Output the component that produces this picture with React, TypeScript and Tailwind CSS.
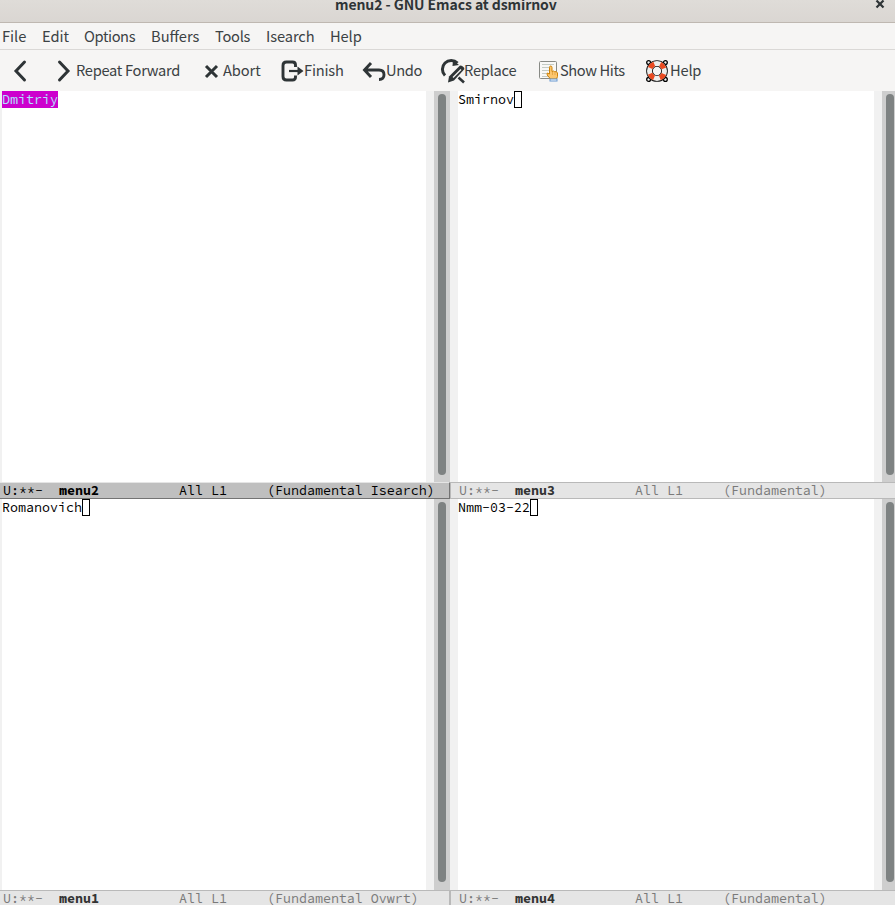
import React from "react";

const MONO = "font-['Source_Code_Pro','Noto_Sans_Mono','Liberation_Mono',monospace] text-[13.333px]";

const menus = [
  { label: "File", at: "w-10" },
  { label: "Edit", at: "w-[42px]" },
  { label: "Options", at: "w-[67px] tracking-[-0.4px]" },
  { label: "Buffers", at: "w-16" },
  { label: "Tools", at: "w-[51px] tracking-[-0.25px]" },
  { label: "Isearch", at: "w-16 tracking-[-0.1px]" },
  { label: "Help", at: "w-10 tracking-[-0.1px]" },
];

function Back() {
  return <svg width="24" height="24" viewBox="0 0 24 24" fill="none" stroke="#2e3436" strokeWidth="3" strokeLinecap="round"><path d="M17.500 3 9 12l8.500 9" /></svg>;
}
function Forward() {
  return <svg width="24" height="24" viewBox="0 0 24 24" fill="none" stroke="#2e3436" strokeWidth="3" strokeLinecap="round"><path d="M7.500 3 16 12 7.500 21" /></svg>;
}
function Abort() {
  return <svg width="16" height="16" viewBox="0 0 16 16" fill="none" stroke="#2e3436" strokeWidth="3"><path d="M3 3l11 11M14 3l-11 11" /></svg>;
}
function Finish() {
  return (
    <svg width="24" height="24" viewBox="0 0 24 24" fill="none" stroke="#2e3436" strokeWidth="2.900">
      <path d="M15.500 8V6Q15.500 3 12.500 3H6.500Q3 3 3 6.500v11Q3 21 6.500 21h6q3 0 3-3V16.500" />
      <path d="M9 12h10" strokeWidth="2.200" />
      <path d="M17.500 7.500 23.500 12 17.500 16.500z" fill="#2e3436" stroke="none" />
    </svg>
  );
}
function Undo() {
  return (
    <svg width="24" height="24" viewBox="0 0 24 24" fill="none" stroke="#2e3436" strokeWidth="2.900">
      <path d="M9 4 2.500 11 9 18M2.500 11H17q5 0 5 4.700T17 20.500" />
    </svg>
  );
}
function Replace() {
  return (
    <svg width="26" height="26" viewBox="0 0 26 26" fill="none" stroke="#2e3436">
      <path d="M5 17.500A8.800 8.800 0 1 1 17.500 5" strokeWidth="3" />
      <path d="M13 2l6 5-6.500 1z" fill="#2e3436" stroke="none" />
      <path d="M8 24.500l1-6L20 7.500q3.500 0 4.500 3.500L14 22.500z" fill="#2e3436" stroke="none" />
      <path d="M13 19.500l8-8" stroke="#f6f5f4" strokeWidth="1.300" />
      <path d="M18.500 19.500l5.500 5" strokeWidth="2.600" />
    </svg>
  );
}
function ShowHits() {
  return (
    <svg width="20" height="22" viewBox="0 0 20 22" fill="none">
      <rect x=".5" y="1.500" width="17" height="17" rx="1" fill="#f8f8f6" stroke="#888a85" />
      <path d="M3 4.500h12M3 7.500h8M3 10.500h7M3 13.500h5M3 16.500h6" stroke="#c4cbc4" />
      <path d="M10.500 7.500q0-1.500 1.200-1.500t1.300 1.500v4l1.500-.5 1.300.8 1.500-.2 1.200 1.400v3.500L17.500 19h-6L8.200 15v-2l2.300 1z" fill="#fcc66d" stroke="#ce8208" />
      <path d="M13.500 12v3M16 12.500v2.500" stroke="#e09a35" strokeWidth=".7" />
      <rect x="11" y="19" width="7" height="2" fill="#fff" stroke="#6798d0" />
    </svg>
  );
}
function HelpRing() {
  return (
    <svg width="22" height="22" viewBox="0 0 22 22" fill="none">
      <g stroke="#000" strokeWidth="1.300">
        <circle cx="2.600" cy="2.600" r="1.900" /><circle cx="19.400" cy="2.600" r="1.900" />
        <circle cx="2.600" cy="19.400" r="1.900" /><circle cx="19.400" cy="19.400" r="1.900" />
      </g>
      <circle cx="11" cy="11" r="7.500" stroke="#111" strokeWidth="6.700" />
      <circle cx="11" cy="11" r="7.500" stroke="#eeeeec" strokeWidth="5" />
      <circle cx="11" cy="11" r="7.500" stroke="#ea4a20" strokeWidth="5" strokeDasharray="5.800 5.981" strokeDashoffset="-2.990" />
    </svg>
  );
}

function Tool({ icon, label, width, gap = "", fit = "" }: { icon: React.ReactNode; label?: string; width: string; gap?: string; fit?: string }) {
  return <div className={`flex h-[42px] shrink-0 items-center ${width} ${gap}`}>{icon}{label && <span className={`pb-0.5 leading-5 whitespace-nowrap ${fit}`}>{label}</span>}</div>;
}

type PaneProps = { text: string; name: string; mode: string; active?: boolean; left?: boolean; bottom?: boolean };

function Buffer({ text, active, left, bottom }: PaneProps) {
  return (
    <div className="flex min-h-0 flex-1">
      <div className={left ? "w-0.5 bg-[#f1f1f1]" : "w-2 bg-[#f1f1f1]"} />
      <div className={`flex flex-1 items-start bg-white leading-[17px] text-black ${MONO}`}>
        <span className={active ? "h-[17px] bg-[#cd00cd] text-[#b0e2ff]" : "h-[17px]"}>{text}</span>
        {!active && <span className="h-[17px] w-2 border border-black" />}
      </div>
      <div className="w-2 bg-[#f1f1f1]" />
      <div className={`flex bg-[#cecece] pt-[3px] pl-1 ${bottom ? "pb-2" : "pb-[7px]"} ${left ? "w-4" : "w-[13px]"}`}>
        <div className="w-2 rounded-full bg-[#7e8282]" />
      </div>
    </div>
  );
}

function ModeLine({ name, mode, active, left, bottom }: PaneProps) {
  return (
    <div className={`shrink-0 border-t leading-[15px] whitespace-pre ${MONO} ${bottom ? "h-[15px]" : "h-[17px] border-b"} ${left ? "border-r pl-[3px]" : "border-l pl-2"} ${active ? "border-t-[#e5e5e5] border-r-[#737373] border-b-[#737373] bg-[#bfbfbf] text-black" : "border-[#b9b9b9] bg-[#e5e5e5] text-[#7a7a7a]"}`}>
      {"U:**-  "}<b className={active ? "text-black" : "text-[#333]"}>{name}</b>{"          All L1     (" + mode + ")"}
    </div>
  );
}

function Pane(props: PaneProps) {
  return (
    <section className={`flex flex-col ${props.bottom ? "h-[406px]" : "h-[408px]"}`}>
      <Buffer {...props} />
      <ModeLine {...props} />
    </section>
  );
}

export default function App() {
  return (
    <div className="flex h-[905px] w-[895px] flex-col overflow-hidden bg-[#f6f5f4] font-['Noto_Sans_CJK_SC','Noto_Sans',sans-serif] text-[14.667px] text-[#3c4244]">
      <header className="flex h-[23px] shrink-0 items-start border-b border-[#bfb8b1] bg-linear-to-b from-[#dfdcd8] to-[#dad6d2]">
        <span className="w-[335px]" />
        <b className="-mt-1.5 text-sm leading-5 tracking-[-0.08px] whitespace-nowrap text-[#2e3436]">menu2 - GNU Emacs at dsmirnov</b>
        <svg className="mr-2.5 ml-auto" width="10" height="10" viewBox="0 0 10 10" stroke="#2e3436" strokeWidth="2.200"><path d="M1.500.5l7 7M8.500.5l-7 7" /></svg>
      </header>
      <nav className="flex h-[27px] shrink-0 items-center border-b border-[#dad8d6] pl-0.5">
        {menus.map((m) => <span key={m.label} className={`shrink-0 leading-5 whitespace-nowrap ${m.at}`}>{m.label}</span>)}
      </nav>
      <div className="flex h-[41px] shrink-0 pl-[7px]">
        <Tool icon={<Back />} width="w-[45px]" />
        <Tool icon={<Forward />} label="Repeat Forward" width="w-[151px]" fit="tracking-[-0.3px]" />
        <Tool icon={<Abort />} label="Abort" width="w-[77px]" gap="gap-1" fit="tracking-[-0.1px]" />
        <Tool icon={<Finish />} label="Finish" width="w-[82px]" fit="tracking-[-0.2px]" />
        <Tool icon={<Undo />} label="Undo" width="w-[78px]" fit="tracking-[-0.4px]" />
        <Tool icon={<Replace />} label="Replace" width="w-[99px]" fit="-ml-0.5 tracking-[-0.25px]" />
        <Tool icon={<ShowHits />} label="Show Hits" width="w-[107px]" gap="gap-px" fit="tracking-[-0.4px]" />
        <Tool icon={<HelpRing />} label="Help" width="w-20" gap="gap-0.5" fit="tracking-[-0.2px]" />
      </div>
      <main className="flex min-h-0 flex-1">
        <div className="w-[450px]">
          <Pane left active text="Dmitriy" name="menu2" mode="Fundamental Isearch" />
          <Pane left bottom text="Romanovich" name="menu1" mode="Fundamental Ovwrt" />
        </div>
        <div className="w-[445px]">
          <Pane text="Smirnov" name="menu3" mode="Fundamental" />
          <Pane bottom text="Nmm-03-22" name="menu4" mode="Fundamental" />
        </div>
      </main>
    </div>
  );
}
